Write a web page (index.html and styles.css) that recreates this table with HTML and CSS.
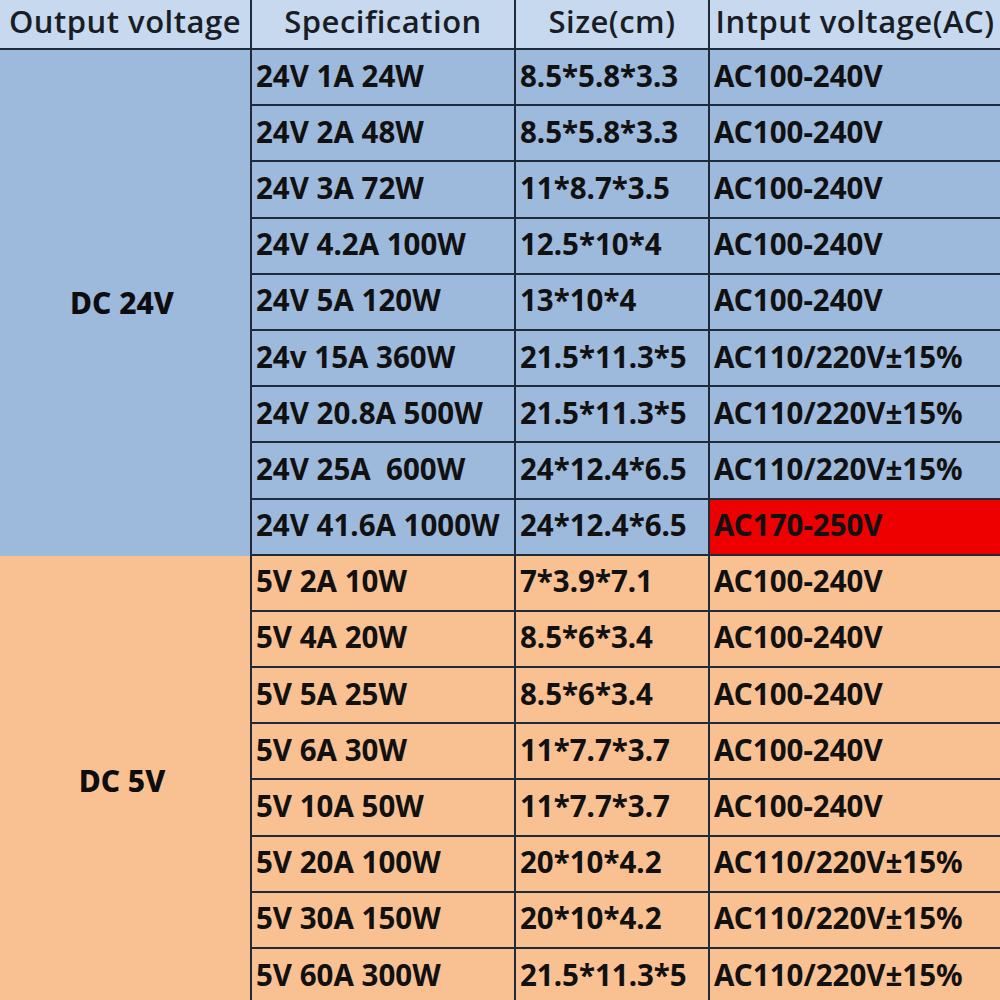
FILE: index.html
```html
<!DOCTYPE html>
<html>
<head>
<meta charset="utf-8">
<link rel="stylesheet" href="styles.css">
</head>
<body>
<div class="sheet">
  <div class="hd first">Output voltage</div>
  <div class="hd">Specification</div>
  <div class="hd">Size(cm)</div>
  <div class="hd">Intput voltage(AC)</div>

  <div class="group blue g24">DC 24V</div>
  <div class="c blue">24V 1A 24W</div><div class="c blue">8.5*5.8*3.3</div><div class="c blue">AC100-240V</div>
  <div class="c blue">24V 2A 48W</div><div class="c blue">8.5*5.8*3.3</div><div class="c blue">AC100-240V</div>
  <div class="c blue">24V 3A 72W</div><div class="c blue">11*8.7*3.5</div><div class="c blue">AC100-240V</div>
  <div class="c blue">24V 4.2A 100W</div><div class="c blue">12.5*10*4</div><div class="c blue">AC100-240V</div>
  <div class="c blue">24V 5A 120W</div><div class="c blue">13*10*4</div><div class="c blue">AC100-240V</div>
  <div class="c blue">24v 15A 360W</div><div class="c blue">21.5*11.3*5</div><div class="c blue">AC110/220V±15%</div>
  <div class="c blue">24V 20.8A 500W</div><div class="c blue">21.5*11.3*5</div><div class="c blue">AC110/220V±15%</div>
  <div class="c blue">24V 25A &nbsp;600W</div><div class="c blue">24*12.4*6.5</div><div class="c blue">AC110/220V±15%</div>
  <div class="c blue">24V 41.6A 1000W</div><div class="c blue">24*12.4*6.5</div><div class="c red">AC170-250V</div>

  <div class="group orange g5">DC 5V</div>
  <div class="c orange">5V 2A 10W</div><div class="c orange">7*3.9*7.1</div><div class="c orange">AC100-240V</div>
  <div class="c orange">5V 4A 20W</div><div class="c orange">8.5*6*3.4</div><div class="c orange">AC100-240V</div>
  <div class="c orange">5V 5A 25W</div><div class="c orange">8.5*6*3.4</div><div class="c orange">AC100-240V</div>
  <div class="c orange">5V 6A 30W</div><div class="c orange">11*7.7*3.7</div><div class="c orange">AC100-240V</div>
  <div class="c orange">5V 10A 50W</div><div class="c orange">11*7.7*3.7</div><div class="c orange">AC100-240V</div>
  <div class="c orange">5V 20A 100W</div><div class="c orange">20*10*4.2</div><div class="c orange">AC110/220V±15%</div>
  <div class="c orange">5V 30A 150W</div><div class="c orange">20*10*4.2</div><div class="c orange">AC110/220V±15%</div>
  <div class="c orange">5V 60A 300W</div><div class="c orange">21.5*11.3*5</div><div class="c orange">AC110/220V±15%</div>
</div>
</body>
</html>
```
FILE: styles.css
```css
html, body {
  margin: 0;
  padding: 0;
  width: 1000px;
  height: 1000px;
  overflow: hidden;
  background: #f9c092;
}
.sheet {
  display: grid;
  grid-template-columns: 250px 264px 194px 292px;
  grid-template-rows: 50px repeat(17, 56.2px);
  font-family: "Noto Sans", "Open Sans", sans-serif;
  color: #111;
}
.hd {
  box-sizing: border-box;
  background: #c6d9ef;
  border-bottom: 2px solid #1f2a3a;
  border-left: 2px solid #1f2a3a;
  display: flex;
  align-items: center;
  justify-content: center;
  font-family: "Open Sans", "Noto Sans", sans-serif;
  font-size: 31px;
  letter-spacing: 0.5px;
  font-weight: 600;
  color: #1a1d24;
  padding-bottom: 6px;
  white-space: nowrap;
}
.hd.first {
  border-left: none;
}
.c {
  box-sizing: border-box;
  border-left: 2px solid #1f2a3a;
  border-bottom: 2px solid #1f2a3a;
  display: flex;
  align-items: center;
  padding: 0 0 4px 4px;
  font-size: 29.5px;
  font-weight: 700;
  white-space: nowrap;
}
.group {
  display: flex;
  align-items: center;
  justify-content: center;
  padding-right: 6px;
  font-size: 30px;
  font-weight: 800;
  color: #0d0d10;
}
.g24 { grid-row: span 9; }
.g5 { grid-row: span 8; }
.blue { background: #9db9dc; }
.orange { background: #f9c092; }
.red { background: #ef0000; }
```
